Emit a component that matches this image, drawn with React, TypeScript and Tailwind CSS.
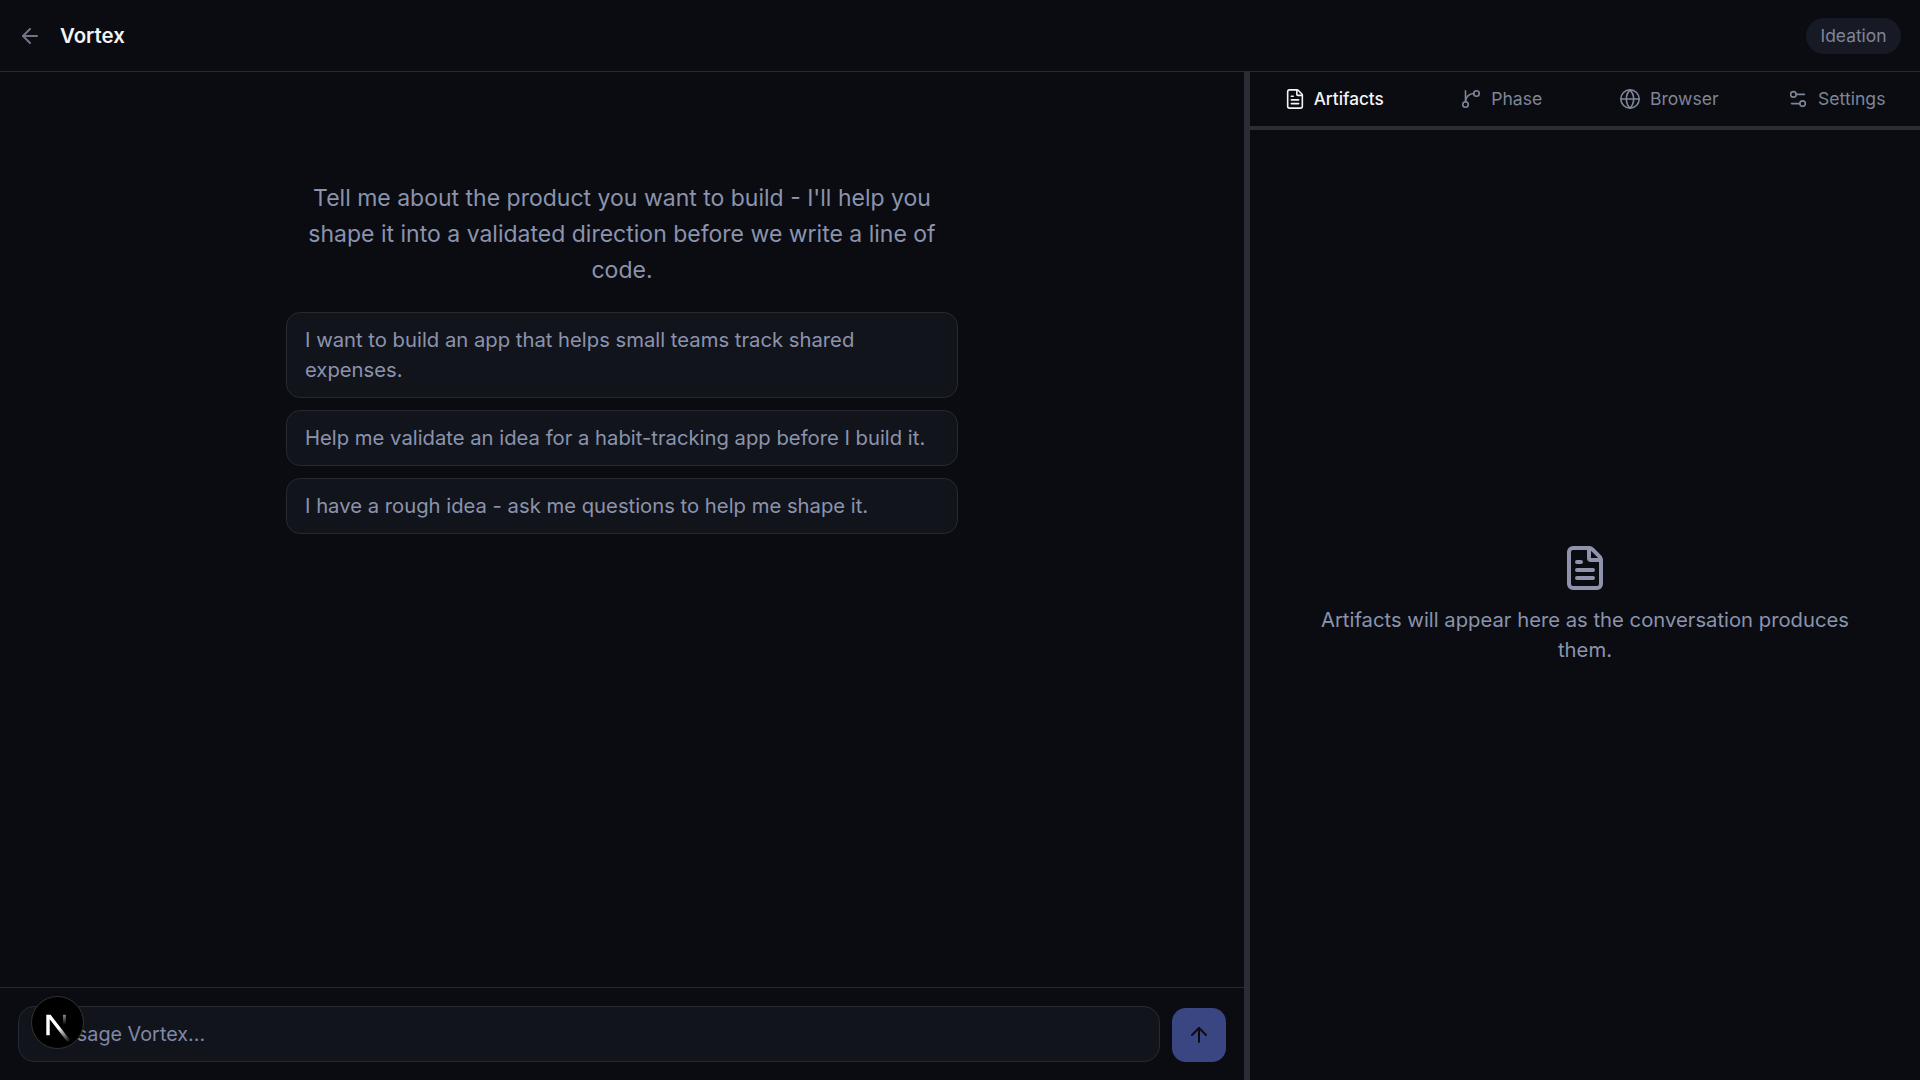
import { ArrowLeft, ArrowUp, FileText, Globe, Settings2 } from "lucide-react";

const suggestions = [
  "I want to build an app that helps small teams track shared expenses.",
  "Help me validate an idea for a habit-tracking app before I build it.",
  "I have a rough idea - ask me questions to help me shape it.",
];

function BranchIcon({ size, strokeWidth }: { size: number; strokeWidth: number }) {
  return (
    <svg
      width={size}
      height={size}
      viewBox="0 0 24 24"
      fill="none"
      stroke="currentColor"
      strokeWidth={strokeWidth}
      strokeLinecap="round"
      strokeLinejoin="round"
    >
      <path d="M6 3v12" />
      <circle cx="18" cy="6" r="3" />
      <circle cx="6" cy="18" r="3" />
      <path d="M15 6a9 9 0 0 0-9 9" />
    </svg>
  );
}

const tabs = [
  { label: "Artifacts", Icon: FileText, active: true },
  { label: "Phase", Icon: BranchIcon, active: false },
  { label: "Browser", Icon: Globe, active: false },
  { label: "Settings", Icon: Settings2, active: false },
];

export default function App() {
  return (
    <div className="relative flex h-screen w-full flex-col overflow-hidden bg-[#0a0c11] font-['Inter',sans-serif] text-[20.25px] leading-[30px] text-[#8b93ad]">
      <header className="flex h-[72px] shrink-0 items-center justify-between border-b border-[#262933] pl-[18px] pr-[19px]">
        <div className="flex items-center gap-[18px]">
          <ArrowLeft size={24} strokeWidth={2} className="text-[#6f7486]" />
          <h1 className="text-[20.4px] font-semibold text-[#f3f4f6]">Vortex</h1>
        </div>
        <span className="flex h-9 items-center rounded-full bg-[#171a24] px-[14.5px] text-[17.4px] text-[#7f8598]">
          Ideation
        </span>
      </header>

      <main className="flex min-h-0 flex-1">
        <section className="flex min-w-0 flex-1 flex-col">
          <div className="flex flex-1 flex-col items-center pt-[108px]">
            <div className="flex w-[672px] flex-col">
              <p className="mb-[24px] text-center text-[23px] leading-[36px] text-[#8b93ad]">
                Tell me about the product you want to build - I'll help you shape it into a validated direction before we write a line of code.
              </p>
              <div className="flex flex-col gap-3">
                {suggestions.map((s) => (
                  <button
                    key={s}
                    className="rounded-[14px] border border-[#262933] bg-[#12141c] px-[18px] py-[12px] text-left text-[20.25px] leading-[30px] text-[#8b93ad]"
                  >
                    {s}
                  </button>
                ))}
              </div>
            </div>
          </div>
          <div className="flex h-[93px] shrink-0 items-end gap-3 border-t border-[#262933] pb-[18px] pl-[18px] pr-[18px]">
            <div className="flex h-[56px] flex-1 items-center rounded-[16px] border border-[#262933] bg-[#12141c] px-[18px]">
              <input
                placeholder="Message Vortex..."
                className="w-full bg-transparent text-[19.8px] outline-none placeholder:text-[#7f88a8]"
              />
            </div>
            <button className="flex h-[54px] w-[54px] items-center justify-center rounded-[14px] bg-[#3a4682]">
              <ArrowUp size={24} strokeWidth={2} className="text-[#0a0c11]" />
            </button>
          </div>
        </section>

        <div className="w-[6px] shrink-0 bg-[#2a2d38]" />

        <aside className="flex w-[670px] shrink-0 flex-col">
          <nav className="flex h-[58px] shrink-0 border-b-4 border-[#2a2d38]">
            {tabs.map(({ label, Icon, active }) => (
              <button
                key={label}
                className={
                  active
                    ? "flex flex-1 items-center justify-center gap-2 text-[17.2px] font-medium text-[#f3f4f6]"
                    : "flex flex-1 items-center justify-center gap-[9px] text-[17.6px] text-[#7f8598]"
                }
              >
                <Icon size={22} strokeWidth={1.75} />
                {label}
              </button>
            ))}
          </nav>
          <div className="flex flex-1 flex-col items-center justify-center px-[50px] pb-[2px]">
            <FileText size={48} strokeWidth={2} className="mb-[13px] text-[#8f94ac]" />
            <p className="w-[560px] text-center text-[20.25px] leading-[30px] text-[#8b93ad]">
              Artifacts will appear here as the conversation produces them.
            </p>
          </div>
        </aside>
      </main>

      <div className="absolute left-[31px] top-[996px] flex h-[53px] w-[53px] items-center justify-center rounded-full border border-[#333] bg-black">
        <svg width="52" height="52" viewBox="0 0 180 180" fill="none" className="-translate-x-px translate-y-[2px]">
          <defs>
            <linearGradient id="nextA" x1="100" y1="100" x2="135" y2="150" gradientUnits="userSpaceOnUse">
              <stop stopColor="#fff" />
              <stop offset="1" stopColor="#fff" stopOpacity="0" />
            </linearGradient>
            <linearGradient id="nextB" x1="121" y1="54" x2="121" y2="90" gradientUnits="userSpaceOnUse">
              <stop stopColor="#fff" stopOpacity="0.55" />
              <stop offset="1" stopColor="#fff" stopOpacity="0" />
            </linearGradient>
          </defs>
          <path d="M149.5 158L69.2 54H54v72h12.1V69.4l73.9 95.5c3.3-2.2 6.5-4.5 9.5-6.9z" fill="url(#nextA)" />
          <rect x="113" y="54" width="10" height="72" fill="url(#nextB)" />
        </svg>
      </div>
    </div>
  );
}
